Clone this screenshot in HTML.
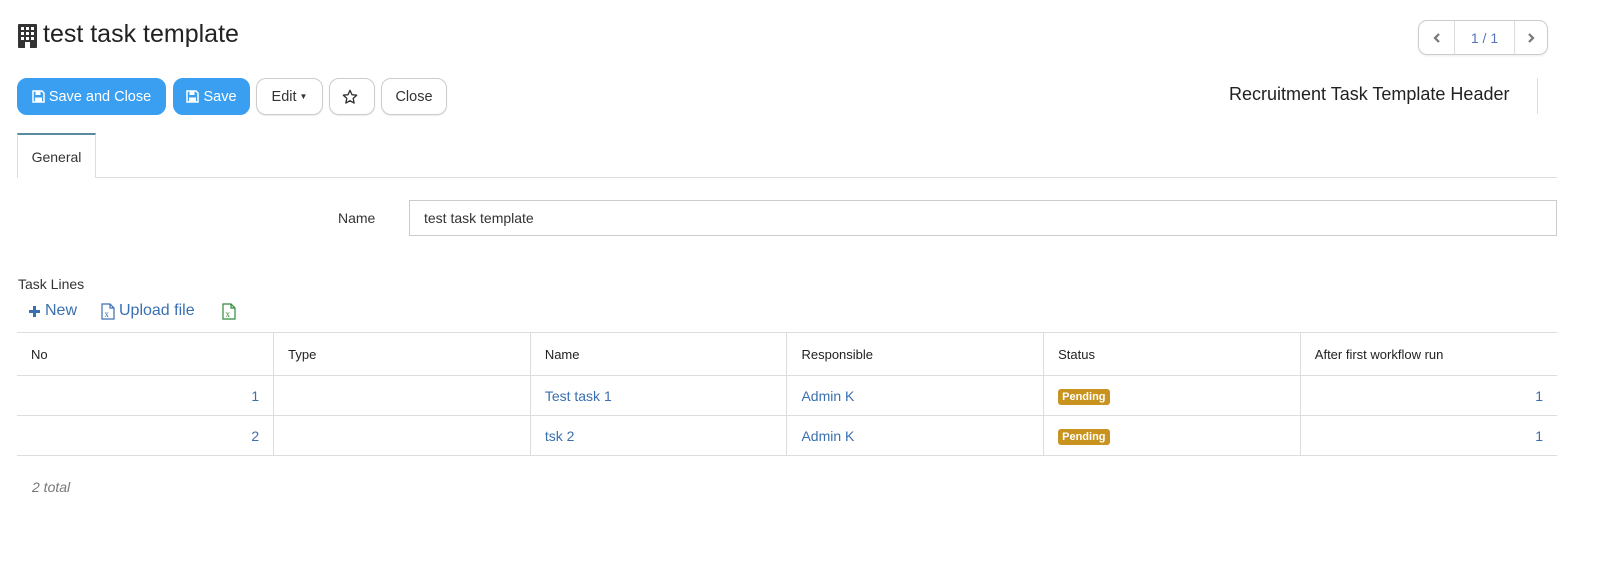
<!DOCTYPE html>
<html><head><meta charset="utf-8"><style>
*{box-sizing:border-box;margin:0;padding:0}
body{width:1601px;height:583px;background:#fff;font-family:"Liberation Sans",sans-serif;color:#333;position:relative;overflow:hidden;font-size:14px}
.a{position:absolute}
.btn{position:absolute;top:78px;height:37px;border-radius:10px;font-size:14.5px;display:flex;align-items:center;justify-content:center}
.btn svg{margin-right:4px}
.pri{background:#3a9ff0;color:#fff;border:1px solid #3a9ff0}
.def{background:#fff;color:#333;border:1px solid #ccc;box-shadow:0 1px 1px rgba(0,0,0,.08)}
.tbl{position:absolute;left:17px;top:332px;width:1540px;border-collapse:collapse;font-size:13px}
.tbl td{border-top:1px solid #ddd;border-bottom:1px solid #ddd;border-left:1px solid #ddd;padding:0 14px;width:256px}
.tbl td:first-child{border-left:none}
.tbl tr.h td{height:43px;color:#222}
.tbl tr.r td{height:40px;color:#3a6fb0;font-size:14px}
.r .n{text-align:right;padding-right:14px}
.badge{display:inline-block;background:#c9931f;color:#fff;font-size:11px;font-weight:bold;padding:2px 4px;border-radius:3px}
</style></head><body>
<svg class="a" style="left:18px;top:24px" width="19" height="24" viewBox="0 0 19 24"><rect width="19" height="24" rx="1" fill="#333"/>
<g fill="#fff"><rect x="3" y="3" width="3" height="3"/><rect x="8" y="3" width="3" height="3"/><rect x="13" y="3" width="3" height="3"/><rect x="3" y="8" width="3" height="3"/><rect x="8" y="8" width="3" height="3"/><rect x="13" y="8" width="3" height="3"/><rect x="3" y="13" width="3" height="3"/><rect x="8" y="13" width="3" height="3"/><rect x="13" y="13" width="3" height="3"/><rect x="7" y="18" width="5" height="6"/></g></svg>
<div class="a" style="left:43px;top:20px;font-size:25px;color:#222">test task template</div>
<div class="a" style="left:1418px;top:20px;width:130px;height:35px;border:1px solid #ccc;border-radius:9px;display:flex;font-size:14px;color:#5575c0;box-shadow:0 1px 2px rgba(0,0,0,.08)">
<div style="width:36px;border-right:1px solid #ddd;display:flex;align-items:center;justify-content:center"><svg width="8" height="10" viewBox="0 0 8 10"><path d="M6 1L2 5l4 4" stroke="#777" stroke-width="2.2" fill="none"/></svg></div>
<div style="width:60px;border-right:1px solid #ddd;display:flex;align-items:center;justify-content:center">1 / 1</div>
<div style="flex:1;display:flex;align-items:center;justify-content:center"><svg width="8" height="10" viewBox="0 0 8 10"><path d="M2 1l4 4-4 4" stroke="#777" stroke-width="2.2" fill="none"/></svg></div></div>
<div class="btn pri" style="left:17px;width:149px"><svg width="13" height="13" viewBox="0 0 13 13"><path d="M1 1h9l2 2v9H1z" fill="none" stroke="#fff" stroke-width="1.5"/><rect x="3.5" y="1.5" width="5" height="3.5" fill="#fff"/><rect x="3" y="7.5" width="7" height="4" fill="#fff"/></svg>Save and Close</div>
<div class="btn pri" style="left:173px;width:77px"><svg width="13" height="13" viewBox="0 0 13 13"><path d="M1 1h9l2 2v9H1z" fill="none" stroke="#fff" stroke-width="1.5"/><rect x="3.5" y="1.5" width="5" height="3.5" fill="#fff"/><rect x="3" y="7.5" width="7" height="4" fill="#fff"/></svg>Save</div>
<div class="btn def" style="left:256px;width:67px">Edit <span style="font-size:8px;margin-left:3px">▼</span></div>
<div class="btn def" style="left:329px;width:46px"><svg width="16" height="16" viewBox="0 0 24 24"><path d="M12 2l3 6.5 7 .8-5.2 4.8 1.4 7L12 17.6 5.8 21.1l1.4-7L2 9.3l7-.8z" fill="none" stroke="#333" stroke-width="2" stroke-linejoin="round"/></svg></div>
<div class="btn def" style="left:381px;width:66px">Close</div>
<div class="a" style="left:1229px;top:84px;font-size:18px;color:#222">Recruitment Task Template Header</div>
<div class="a" style="left:1537px;top:78px;width:1px;height:36px;background:#ddd"></div>
<div class="a" style="left:17px;top:133px;width:79px;height:45px;border:1px solid #ddd;border-top:2px solid #5a8aa0;border-bottom:none;background:#fff;font-size:14px;display:flex;align-items:center;justify-content:center;z-index:2">General</div>
<div class="a" style="left:17px;top:177px;width:1540px;height:1px;background:#ddd"></div>
<div class="a" style="left:338px;top:210px;font-size:14px">Name</div>
<div class="a" style="left:409px;top:200px;width:1148px;height:36px;border:1px solid #ccc;padding:9px 14px;font-size:14px">test task template</div>
<div class="a" style="left:18px;top:276px;font-size:14px">Task Lines</div>
<div class="a" style="left:28px;top:302px;font-size:16px;color:#3a6fb0;display:flex;align-items:center"><svg width="13" height="13" viewBox="0 0 13 13" style="margin-right:4px"><path d="M6.5 1v11M1 6.5h11" stroke="#3a6fb0" stroke-width="3"/></svg>New</div>
<div class="a" style="left:101px;top:302px;font-size:16px;color:#3a6fb0;display:flex;align-items:center"><svg width="14" height="17" viewBox="0 0 14 17" style="margin-right:4px"><path d="M1 1h8l4 4v11H1z M9 1v4h4" fill="none" stroke="#3a6fb0" stroke-width="1.2"/><text x="3.5" y="14" font-size="9" fill="#3a6fb0" font-family="Liberation Serif">x</text></svg>Upload file</div>
<svg class="a" style="left:222px;top:303px" width="14" height="17" viewBox="0 0 14 17"><path d="M1 1h8l4 4v11H1z M9 1v4h4" fill="none" stroke="#2e8b3a" stroke-width="1.2"/><text x="3.5" y="14" font-size="9" fill="#2e8b3a" font-family="Liberation Serif">x</text></svg>
<table class="tbl">
<tr class="h"><td>No</td><td>Type</td><td>Name</td><td>Responsible</td><td>Status</td><td>After first workflow run</td></tr>
<tr class="r"><td class="n">1</td><td></td><td>Test task 1</td><td>Admin K</td><td><span class="badge">Pending</span></td><td class="n">1</td></tr>
<tr class="r"><td class="n">2</td><td></td><td>tsk 2</td><td>Admin K</td><td><span class="badge">Pending</span></td><td class="n">1</td></tr>
</table>
<div class="a" style="left:32px;top:479px;font-style:italic;color:#777;font-size:14px">2 total</div>
</body></html>
